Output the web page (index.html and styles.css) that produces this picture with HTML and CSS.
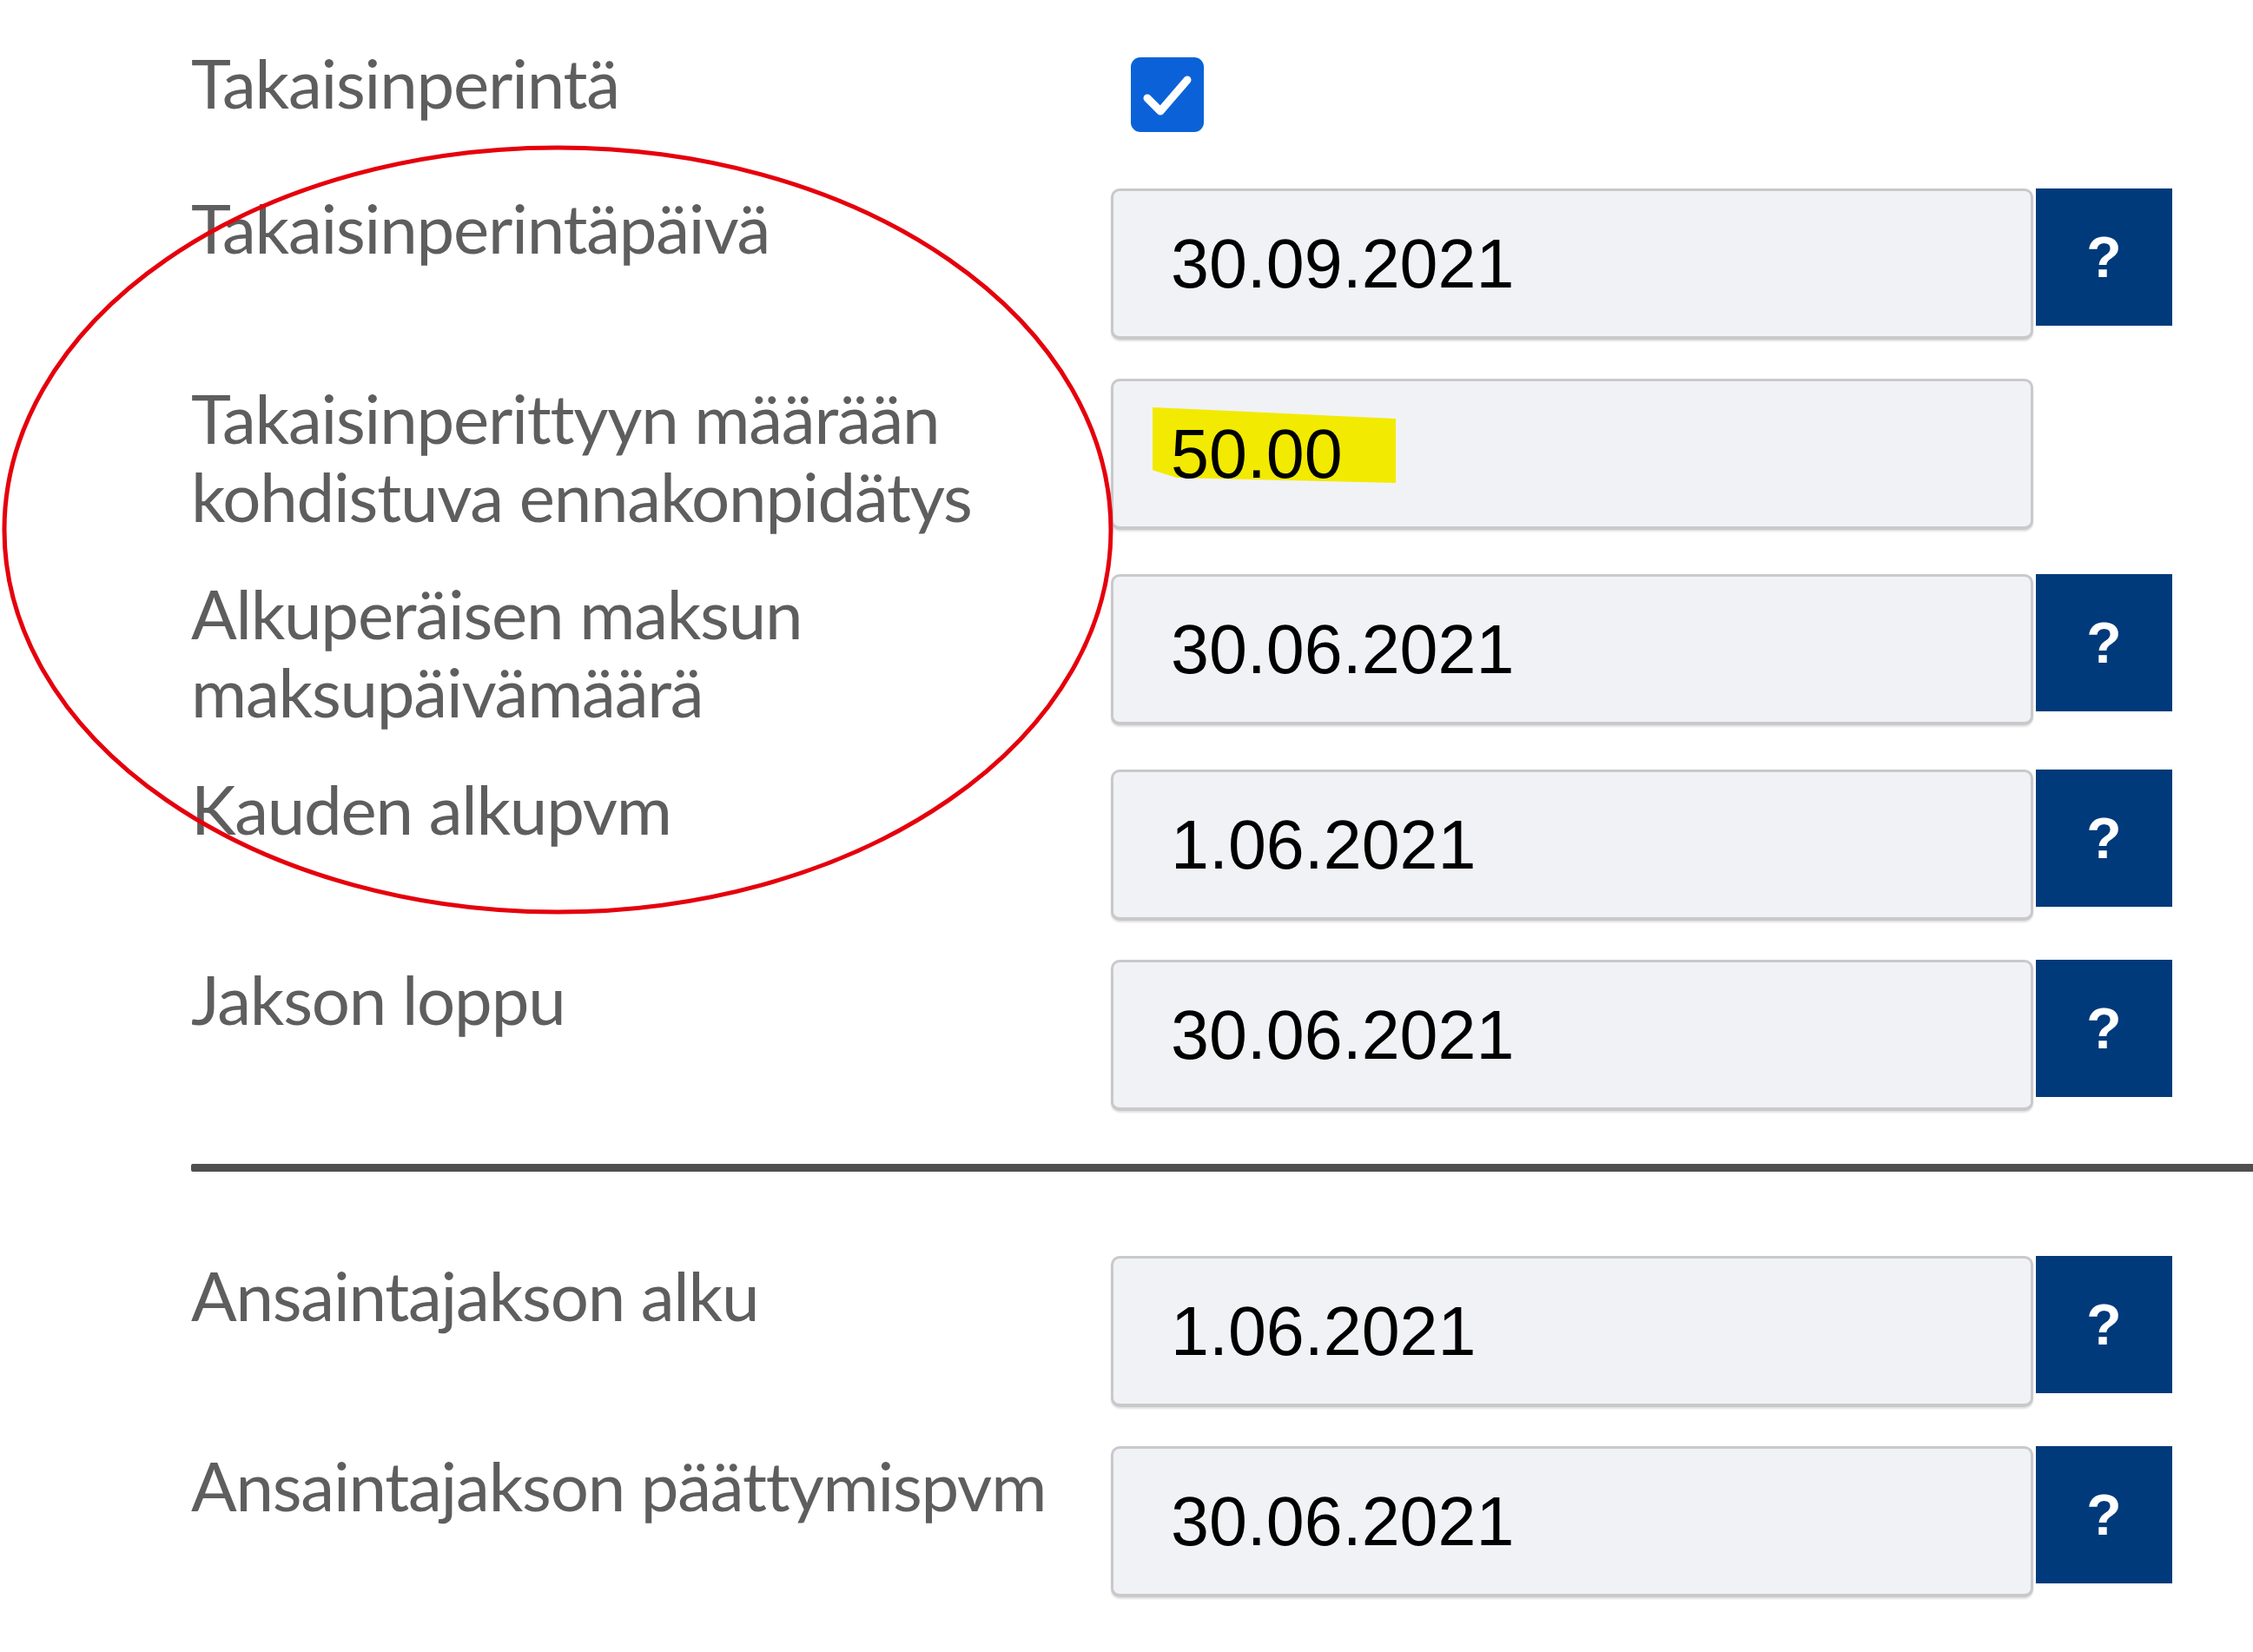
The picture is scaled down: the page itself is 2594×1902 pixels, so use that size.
FILE: index.html
```html
<!DOCTYPE html>
<html lang="fi">
<head>
<meta charset="utf-8">
<title>Takaisinperintä</title>
<link rel="stylesheet" href="styles.css">
</head>
<body>
<div class="page">
  <div class="form">
    <div class="row row-check">
      <div class="label">Takaisinperintä</div>
      <div class="checkbox">
        <svg viewBox="0 0 84 86" width="84" height="86"><path d="M19 47 L34 62 L65 26" fill="none" stroke="#fff" stroke-width="9" stroke-linecap="round" stroke-linejoin="round"/></svg>
      </div>
    </div>
    <div class="row">
      <div class="label">Takaisinperintäpäivä</div>
      <div class="field"><span class="value">30.09.2021</span></div>
      <div class="help">?</div>
    </div>
    <div class="row">
      <div class="label">Takaisinperittyyn määrään<br>kohdistuva ennakonpidätys</div>
      <div class="field"><span class="marker"></span><span class="value">50.00</span></div>
    </div>
    <div class="row">
      <div class="label">Alkuperäisen maksun<br>maksupäivämäärä</div>
      <div class="field"><span class="value">30.06.2021</span></div>
      <div class="help">?</div>
    </div>
    <div class="row">
      <div class="label">Kauden alkupvm</div>
      <div class="field"><span class="value">1.06.2021</span></div>
      <div class="help">?</div>
    </div>
    <div class="row">
      <div class="label">Jakson loppu</div>
      <div class="field"><span class="value">30.06.2021</span></div>
      <div class="help">?</div>
    </div>
    <div class="separator"></div>
    <div class="row">
      <div class="label">Ansaintajakson alku</div>
      <div class="field"><span class="value">1.06.2021</span></div>
      <div class="help">?</div>
    </div>
    <div class="row">
      <div class="label">Ansaintajakson päättymispvm</div>
      <div class="field"><span class="value">30.06.2021</span></div>
      <div class="help">?</div>
    </div>
  </div>
  <svg class="annotation" width="2594" height="1902" viewBox="0 0 2594 1902">
    <ellipse cx="642" cy="610" rx="637" ry="440" fill="none" stroke="#e5000c" stroke-width="5"/>
  </svg>
</div>
</body>
</html>
```

FILE: styles.css
```css
html, body {
  margin: 0;
  padding: 0;
  background: #ffffff;
}

.page {
  position: relative;
  width: 2594px;
  height: 1902px;
  overflow: hidden;
}

.form {
  display: flex;
  flex-direction: column;
  gap: 45px;
  padding: 50px 0 0 220px;
}

.row {
  display: flex;
  align-items: flex-start;
}

.row-check {
  margin-bottom: 20px;
}

.label {
  width: 1059px;
  flex: none;
  font-family: "Lato", "Open Sans", sans-serif;
  font-size: 78px;
  line-height: 90px;
  letter-spacing: -1.2px;
  color: #5e5e5e;
}

.checkbox {
  width: 84px;
  height: 86px;
  margin: 16px 0 0 23px;
  background: #0b62d8;
  border-radius: 11px;
}

.checkbox svg {
  display: block;
}

.field {
  position: relative;
  box-sizing: border-box;
  width: 1062px;
  height: 174px;
  flex: none;
  display: flex;
  align-items: center;
  padding-left: 66px;
  background: #f1f2f6;
  border: 3px solid #c9c9cb;
  border-bottom-width: 4px;
  border-radius: 10px;
  box-shadow: 0 2px 2px rgba(0, 0, 0, 0.12);
}

.value {
  position: relative;
  font-family: "Liberation Sans", Arial, sans-serif;
  font-size: 79px;
  color: #000;
  letter-spacing: 0;
}

.marker {
  position: absolute;
  left: 45px;
  top: 30px;
  width: 280px;
  height: 87px;
  background: #f2ea00;
  clip-path: polygon(0 0, 20% 3%, 100% 15%, 100% 100%, 10% 93%, 0 83%);
}

.help {
  width: 157px;
  height: 158px;
  margin-left: 3px;
  flex: none;
  background: #003a7a;
  color: #ffffff;
  display: flex;
  align-items: center;
  justify-content: center;
  font-family: "Liberation Sans", Arial, sans-serif;
  font-weight: bold;
  font-size: 66px;
}

.separator {
  height: 9px;
  margin: 16px 0 52px 0;
  background: #4f4f4f;
  border-radius: 2px 0 0 2px;
}

.annotation {
  position: absolute;
  left: 0;
  top: 0;
  pointer-events: none;
}
```
